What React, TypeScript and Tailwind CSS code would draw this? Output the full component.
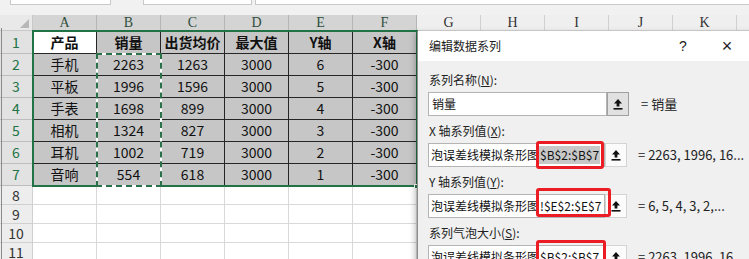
import React from 'react';

const CJK = "font-['Noto_Sans_CJK_SC','Noto_Sans',sans-serif]";

const cols = ['A', 'B', 'C', 'D', 'E', 'F', 'G', 'H', 'I', 'J', 'K', ''];

const rows = [
  ['产品', '销量', '出货均价', '最大值', 'Y轴', 'X轴'],
  ['手机', '2263', '1263', '3000', '6', '-300'],
  ['平板', '1996', '1596', '3000', '5', '-300'],
  ['手表', '1698', '899', '3000', '4', '-300'],
  ['相机', '1324', '827', '3000', '3', '-300'],
  ['耳机', '1002', '719', '3000', '2', '-300'],
  ['音响', '554', '618', '3000', '1', '-300'],
];

const UploadIcon: React.FC = () => (
  <svg width="10" height="12" viewBox="0 0 10 12">
    <path d="M5 1 L9 5.5 H6.4 V8.6 H3.6 V5.5 H1 Z" fill="#111" />
    <rect x="0.5" y="10" width="9" height="1.6" fill="#111" />
  </svg>
);

const Sheet: React.FC = () => {
  return (
    <div className="relative">
      {/* column headers */}
      <div className="flex h-[16px]">
        <div className="relative w-[33px] shrink-0 bg-[#e9e9e9] border-r border-b border-[#c8c8c8]">
          <div className="absolute right-[3px] bottom-[2px] w-0 h-0 border-l-[9px] border-l-transparent border-b-[9px] border-b-[#b8b8b8]" />
        </div>
        {cols.map((c, i) => (
          <div
            key={i}
            className={`w-[64px] shrink-0 flex items-center justify-center border-r border-b font-['Liberation_Serif',serif] text-[14px] leading-none ${
              i < 6 ? 'bg-[#d4d4d4] text-[#2f4f3c] border-[#b5b5b5]' : 'bg-[#efefef] text-[#333] border-[#d0d0d0]'
            }`}
          >
            {c}
          </div>
        ))}
      </div>

      {/* data rows */}
      {rows.map((r, ri) => (
        <div key={ri} className={`flex ${ri === 0 ? 'h-[23px]' : 'h-[22px]'}`}>
          <div className="w-[33px] shrink-0 flex items-center justify-center bg-[#e2e2e2] text-[#217346] border-r border-b border-[#bdbdbd] text-[14px]">
            {ri + 1}
          </div>
          {cols.map((c, ci) => {
            const inTable = ci < 6;
            const active = ri === 0 && ci === 0;
            return (
              <div
                key={ci}
                className={`w-[64px] shrink-0 flex items-center justify-center text-[14px] border-r border-b ${
                  inTable
                    ? `${active ? 'bg-white' : 'bg-[#c6c6c6]'} border-[#262626] text-[#111] ${ri === 0 ? 'font-bold' : ''}`
                    : 'bg-white border-[#d9d9d9]'
                }`}
              >
                {inTable ? r[ci] : ''}
              </div>
            );
          })}
        </div>
      ))}

      {[8, 9, 10, 11].map((n) => (
        <div key={n} className="flex h-[19px]">
          <div className="w-[33px] shrink-0 flex items-center justify-center bg-[#ededed] text-[#333] border-r border-b border-[#d0d0d0] text-[14px]">
            {n}
          </div>
          {cols.map((c, ci) => (
            <div key={ci} className="w-[64px] shrink-0 bg-white border-r border-b border-[#d9d9d9]" />
          ))}
        </div>
      ))}

      {/* selection border A1:F7 */}
      <div className="absolute left-[32px] top-[15px] w-[386px] h-[157px] border-2 border-[#217346] pointer-events-none" />
      {/* copy marquee B2:B7 */}
      <div className="absolute left-[96px] top-[38px] w-[66px] h-[134px] border-2 border-white pointer-events-none">
        <div className="absolute -inset-[2px] border-2 border-dashed border-[#2a7048]" />
      </div>
      {/* fill handle */}
      <div className="absolute left-[414px] top-[169px] w-[5px] h-[5px] bg-[#217346] border border-white" />
    </div>
  );
};

const Field: React.FC<{
  label: React.ReactNode;
  prefix?: string;
  value: string;
  selected?: boolean;
  result: string;
}> = ({ label, prefix, value, selected, result }) => (
  <div className="mb-[3px]">
    <div className="h-[24px] flex items-center pl-[1px] text-[12px] text-[#222]">{label}</div>
    <div className="flex items-center h-[24px]">
      <div className="w-[177px] h-[24px] bg-white border border-[#b4b4b4] flex items-center pl-[2px] overflow-hidden whitespace-nowrap text-[12px] text-[#111]">
        {prefix && <span>{prefix}</span>}
        <span className={selected ? 'bg-[#c8c8c8] px-[1px]' : 'px-[1px]'}>{value}</span>
      </div>
      <div className="w-[22px] h-[24px] flex items-center justify-center border bg-[#fbfbfb] border-[#d4d4d4]">
        <UploadIcon />
      </div>
      <div className="ml-[11px] text-[13px] text-[#222] whitespace-nowrap">{result}</div>
    </div>
  </div>
);

const Dialog: React.FC = () => (
  <div className={`absolute left-[417px] top-[31px] w-[340px] h-[240px] bg-[#f0f0f0] border-l border-[#8d8d8d] shadow-[-2px_2px_6px_rgba(0,0,0,0.25)] ${CJK}`}>
    <div className="h-[30px] bg-white flex items-center pl-[11px] pr-[20px] text-[12px] text-[#222]">
      <span className="flex-1">编辑数据系列</span>
      <span className="w-[20px] text-center font-['Liberation_Sans',sans-serif] text-[14px]">?</span>
      <span className="w-[20px] ml-[24px] text-center font-['Liberation_Sans',sans-serif] text-[18px] font-light">×</span>
    </div>
    <div className="pt-[7px] pl-[10px]">
      <div className="mb-[3px]">
        <div className="h-[24px] flex items-center pl-[1px] text-[12px] text-[#222]">
          <span>
            系列名称(<span className="underline">N</span>):
          </span>
        </div>
        <div className="flex items-center h-[24px]">
          <div className="w-[179px] h-[24px] bg-white border border-[#b4b4b4] flex items-center pl-[3px] text-[12px] text-[#111]">
            销量
          </div>
          <div className="w-[22px] h-[24px] flex items-center justify-center border bg-[#e1e1e1] border-[#a0a0a0]">
            <UploadIcon />
          </div>
          <div className="ml-[12px] text-[13px] text-[#222]">= 销量</div>
        </div>
      </div>
      <Field
        label={<span>X 轴系列值(<span className="underline">X</span>):</span>}
        prefix="泡误差线模拟条形图"
        value="$B$2:$B$7"
        selected
        result="= 2263, 1996, 16..."
      />
      <Field
        label={<span>Y 轴系列值(<span className="underline">Y</span>):</span>}
        prefix="泡误差线模拟条形图"
        value="!$E$2:$E$7"
        result="= 6, 5, 4, 3, 2,..."
      />
      <Field
        label={<span>系列气泡大小(<span className="underline">S</span>):</span>}
        prefix="泡误差线模拟条形图"
        value="$B$2:$B$7"
        result="= 2263, 1996, 16..."
      />
    </div>

    {/* red annotation boxes */}
    <div className="absolute left-[118px] top-[110px] w-[68px] h-[28px] border-[3px] border-[#ec1c24] rounded-[3px]" />
    <div className="absolute left-[118px] top-[157px] w-[75px] h-[29px] border-[3px] border-[#ec1c24] rounded-[3px]" />
    <div className="absolute left-[118px] top-[209px] w-[70px] h-[30px] border-[3px] border-[#ec1c24] rounded-[3px]" />
  </div>
);

export default function App() {
  return (
    <div className={`relative w-[749px] h-[259px] overflow-hidden bg-white ${CJK}`}>
      {/* formula bar remnant */}
      <div className="h-[15px] bg-[#f1f1f1] relative">
        <div className="absolute left-[10px] top-0 w-[101px] h-[5px] bg-white border border-t-0 border-[#c9c9c9]" />
        <div className="absolute left-[143px] top-0 w-[109px] h-[5px] bg-white border border-t-0 border-[#c9c9c9]" />
        <div className="absolute left-[255px] top-0 w-[500px] h-[5px] bg-white border border-t-0 border-[#c9c9c9]" />
      </div>
      <Sheet />
      <div className="absolute left-[1px] top-[28px] w-[1px] h-[231px] bg-[#8a8a8a]" />
      <Dialog />
    </div>
  );
}
